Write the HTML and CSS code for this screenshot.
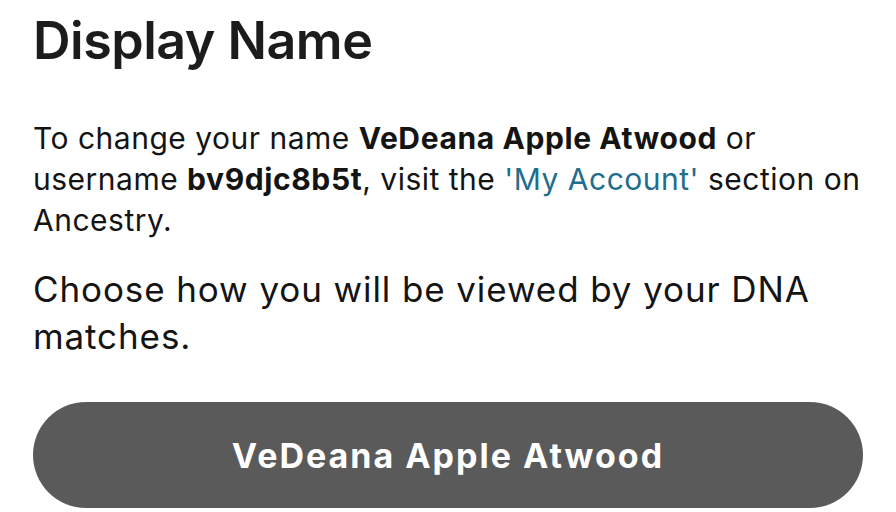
FILE: index.html
```html
<!DOCTYPE html>
<html lang="en">
<head>
<meta charset="utf-8">
<title>Display Name</title>
<link rel="stylesheet" href="styles.css">
</head>
<body>
<main class="panel">
  <h1 class="title">Display Name</h1>
  <p class="info">To change your name <strong>VeDeana Apple Atwood</strong> or username <strong>bv9djc8b5t</strong>, visit the <a class="link" href="#">'My Account'</a> section on Ancestry.</p>
  <p class="prompt">Choose how you will be viewed by your DNA matches.</p>
  <button class="choice" type="button">VeDeana Apple Atwood</button>
</main>
</body>
</html>
```
FILE: styles.css
```css
html, body {
  margin: 0;
  padding: 0;
  background: #ffffff;
}
body {
  font-family: Inter, "Noto Sans", "Liberation Sans", sans-serif;
  color: #141414;
}
.panel {
  display: flex;
  flex-direction: column;
  padding: 10px 33px 0 33px;
}
.title {
  margin: 0;
  font-size: 52px;
  line-height: 62px;
  font-weight: 600;
  letter-spacing: -0.5px;
  color: #1c1c1c;
}
.info {
  margin: 46px -4px 0 0;
  font-size: 30px;
  line-height: 41px;
  font-weight: 400;
  letter-spacing: 0.5px;
}
.info strong {
  font-weight: 700;
  letter-spacing: 0.6px;
}
.link {
  color: #1f6e8c;
  text-decoration: none;
}
.prompt {
  margin: 25px 0 0 0;
  font-size: 35px;
  line-height: 47px;
  font-weight: 400;
  letter-spacing: 0.9px;
}
.choice {
  margin-top: 42px;
  height: 106px;
  border: none;
  border-radius: 53px;
  background: #5a5a5a;
  color: #ffffff;
  font-family: Inter, "Noto Sans", "Liberation Sans", sans-serif;
  font-size: 34px;
  font-weight: 700;
  letter-spacing: 2px;
  cursor: pointer;
}
```
